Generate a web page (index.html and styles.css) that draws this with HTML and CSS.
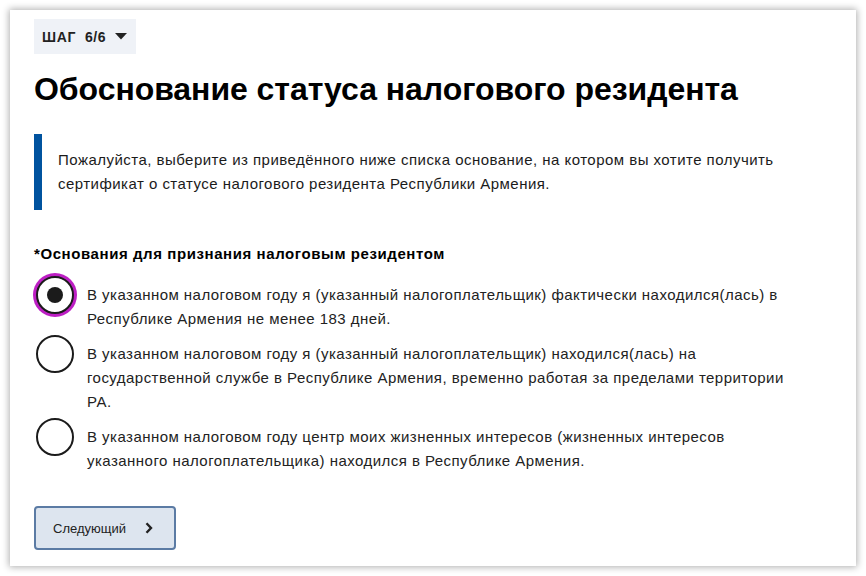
FILE: index.html
```html
<!DOCTYPE html>
<html lang="ru">
<head>
<meta charset="utf-8">
<title>Обоснование статуса налогового резидента</title>
<link rel="stylesheet" href="styles.css">
</head>
<body>
<main class="card">
  <div class="step">
    <span class="step-text">ШАГ&nbsp; 6/6</span>
    <svg class="caret" width="12" height="7" viewBox="0 0 12 7" aria-hidden="true"><path d="M0 0H12L6 6.5Z" fill="#222"/></svg>
  </div>
  <h1 class="title">Обоснование статуса налогового резидента</h1>
  <div class="notice">
    <p>Пожалуйста, выберите из приведённого ниже списка основание, на котором вы хотите получить сертификат о статусе налогового резидента Республики Армения.</p>
  </div>
  <fieldset class="group">
    <legend class="group-label">*Основания для признания налоговым резидентом</legend>
    <label class="option">
      <span class="radio radio-checked"><span class="dot"></span></span>
      <span class="option-text">В указанном налоговом году я (указанный налогоплательщик) фактически находился(лась) в Республике Армения не менее 183 дней.</span>
    </label>
    <label class="option">
      <span class="radio"></span>
      <span class="option-text">В указанном налоговом году я (указанный налогоплательщик) находился(лась) на<br>государственной службе в Республике Армения, временно работая за пределами территории РА.</span>
    </label>
    <label class="option">
      <span class="radio"></span>
      <span class="option-text">В указанном налоговом году центр моих жизненных интересов (жизненных интересов указанного налогоплательщика) находился в Республике Армения.</span>
    </label>
  </fieldset>
  <button class="next" type="button">
    <span>Следующий</span>
    <svg class="chev" width="8" height="12" viewBox="0 0 8 12" aria-hidden="true"><path d="M1.5 1.2L6 6L1.5 10.8" fill="none" stroke="#222" stroke-width="2.4"/></svg>
  </button>
</main>
</body>
</html>
```
FILE: styles.css
```css
html, body {
  margin: 0;
  padding: 0;
  background: #ffffff;
}
body {
  padding: 10px;
  font-family: "Liberation Sans", Arial, sans-serif;
  color: #1b1b1b;
}
.card {
  box-sizing: border-box;
  min-height: 556px;
  background: #fff;
  box-shadow: 0 0 7px 1px rgba(0, 0, 0, 0.32);
  padding: 9px 24px 16px 24px;
}
.step {
  display: inline-flex;
  align-items: center;
  height: 35px;
  box-sizing: border-box;
  padding: 0 9px 0 8px;
  background: #eff2f7;
  gap: 9px;
}
.step-text {
  font-size: 14px;
  font-weight: 700;
  color: #222;
  letter-spacing: 0.6px;
}
.caret {
  display: block;
}
.title {
  margin: 16px 0 0 0;
  font-size: 32px;
  line-height: 38px;
  font-weight: 700;
  color: #000;
  letter-spacing: -0.05px;
}
.notice {
  margin-top: 26px;
  border-left: 8px solid #00539f;
  padding: 14px 0 14px 16px;
}
.notice p {
  margin: 0;
  font-size: 15px;
  line-height: 24px;
  color: #1b1b1b;
  letter-spacing: 0.47px;
}
.group {
  border: 0;
  margin: 32px 0 0 0;
  padding: 0;
  min-width: 0;
}
.group-label {
  padding: 0;
  font-size: 15px;
  line-height: 24px;
  font-weight: 700;
  color: #000;
  letter-spacing: 0.58px;
  margin-bottom: 10px;
}
.option {
  display: flex;
  align-items: flex-start;
}
.radio {
  flex: none;
  box-sizing: border-box;
  width: 38px;
  height: 38px;
  margin: 0 13px 0 2px;
  border: 2px solid #1b1b1b;
  border-radius: 50%;
  display: flex;
  align-items: center;
  justify-content: center;
  background: #fff;
}
.radio-checked {
  box-shadow: 0 0 0 3px #bd1fc4;
}
.dot {
  width: 16px;
  height: 16px;
  border-radius: 50%;
  background: #1b1b1b;
}
.option-text {
  max-width: 712px;
  padding: 7px 0 4px 0;
  font-size: 15px;
  line-height: 24px;
  color: #222;
  letter-spacing: 0.46px;
}
.next {
  margin-top: 29px;
  display: inline-flex;
  align-items: center;
  box-sizing: border-box;
  width: 142px;
  height: 44px;
  padding: 0 0 0 17px;
  gap: 19px;
  background: #dde5ef;
  border: 2px solid #5b7ba4;
  border-radius: 4px;
  font-family: "Liberation Sans", Arial, sans-serif;
  font-size: 13px;
  color: #222;
}
.chev {
  display: block;
}
```
